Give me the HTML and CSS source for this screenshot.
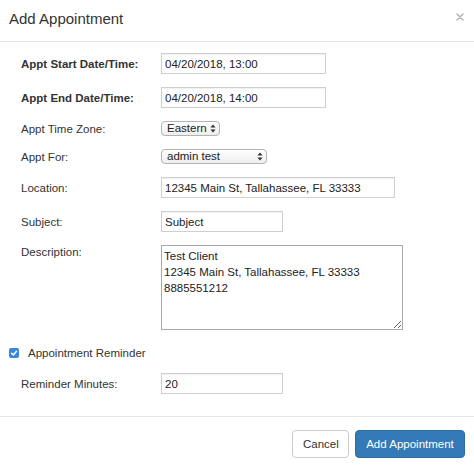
FILE: index.html
```html
<!DOCTYPE html>
<html lang="en">
<head>
<meta charset="utf-8">
<title>Add Appointment</title>
<link rel="stylesheet" href="styles.css">
</head>
<body>
<div class="modal">
  <div class="modal-header">
    <h4 class="modal-title">Add Appointment</h4>
    <svg class="close" width="8" height="8" viewBox="0 0 8 8" aria-label="Close"><path d="M1 1 L7 7 M7 1 L1 7" stroke="#b5b5b5" stroke-width="1.6" stroke-linecap="round"/></svg>
  </div>
  <div class="modal-body">
    <div class="row">
      <label class="lbl bold">Appt Start Date/Time:</label>
      <input class="field w-date" type="text" value="04/20/2018, 13:00">
    </div>
    <div class="row">
      <label class="lbl bold">Appt End Date/Time:</label>
      <input class="field w-date" type="text" value="04/20/2018, 14:00">
    </div>
    <div class="row">
      <label class="lbl">Appt Time Zone:</label>
      <div class="select w-tz"><span>Eastern</span><svg class="arrows" width="6" height="9" viewBox="0 0 6 9"><path d="M3 0.5 L5.6 3.6 L0.4 3.6 Z M3 8.5 L5.6 5.4 L0.4 5.4 Z" fill="#333"/></svg></div>
    </div>
    <div class="row">
      <label class="lbl">Appt For:</label>
      <div class="select w-for"><span>admin test</span><svg class="arrows" width="6" height="9" viewBox="0 0 6 9"><path d="M3 0.5 L5.6 3.6 L0.4 3.6 Z M3 8.5 L5.6 5.4 L0.4 5.4 Z" fill="#333"/></svg></div>
    </div>
    <div class="row">
      <label class="lbl">Location:</label>
      <input class="field w-loc" type="text" value="12345 Main St, Tallahassee, FL 33333">
    </div>
    <div class="row">
      <label class="lbl">Subject:</label>
      <input class="field w-sub" type="text" value="Subject">
    </div>
    <div class="row top">
      <label class="lbl">Description:</label>
      <textarea class="area">Test Client
12345 Main St, Tallahassee, FL 33333
8885551212</textarea>
    </div>
    <div class="check-row">
      <span class="checkbox"><svg width="10" height="10" viewBox="0 0 10 10"><path d="M2.6 5.2 L4.3 6.9 L7.5 3.2" stroke="#fff" stroke-width="1.5" fill="none" stroke-linecap="round" stroke-linejoin="round"/></svg></span>
      <span class="check-label">Appointment Reminder</span>
    </div>
    <div class="row">
      <label class="lbl">Reminder Minutes:</label>
      <input class="field w-sub" type="text" value="20">
    </div>
  </div>
  <div class="modal-footer">
    <button class="btn btn-default" type="button">Cancel</button>
    <button class="btn btn-primary" type="button">Add Appointment</button>
  </div>
</div>
</body>
</html>
```
FILE: styles.css
```css
html, body {
  margin: 0;
  padding: 0;
  background: #fff;
}
body {
  font-family: "Liberation Sans", Arial, sans-serif;
  font-size: 11.5px;
  color: #333;
}
.modal {
  width: 474px;
  background: #fff;
}
.modal-header {
  display: flex;
  justify-content: space-between;
  align-items: flex-start;
  padding: 10px 10px 13px 9px;
  border-bottom: 1px solid #e5e5e5;
}
.modal-title {
  margin: 0;
  font-size: 15px;
  line-height: 18px;
  font-weight: normal;
  color: #333;
}
.close {
  margin-top: 3px;
  display: block;
}
.modal-body {
  padding: 11px 12px 22px 9px;
  display: flex;
  flex-direction: column;
  gap: 13px;
}
.row {
  display: flex;
  align-items: center;
  padding-left: 12px;
}
.row.top {
  align-items: flex-start;
}
.lbl {
  width: 140px;
  flex: none;
  line-height: 14px;
}
.bold {
  font-weight: bold;
}
.field {
  box-sizing: border-box;
  height: 21px;
  margin: 0;
  padding: 0 3px;
  border: 1px solid #cfcfcf;
  box-shadow: inset 0 1px 1px rgba(0,0,0,0.06);
  font-family: "Liberation Sans", Arial, sans-serif;
  font-size: 11.5px;
  color: #222;
  background: #fff;
  outline: none;
}
.w-date { width: 165px; }
.w-loc { width: 234px; }
.w-sub { width: 122px; }
.select {
  box-sizing: border-box;
  height: 15px;
  display: flex;
  align-items: center;
  justify-content: space-between;
  gap: 3px;
  padding: 0 3px 0 5px;
  border: 1px solid #b3b3b3;
  border-radius: 4px;
  background: linear-gradient(#ffffff, #eeeeee);
  font-size: 11.5px;
  color: #222;
}
.select span {
  line-height: 13px;
  white-space: nowrap;
}
.arrows {
  display: block;
  flex: none;
}
.w-tz { width: 59px; }
.w-for { width: 106px; }
.area {
  box-sizing: border-box;
  width: 242px;
  height: 85px;
  margin: 0;
  padding: 2px 2px;
  border: 1px solid #a9a9a9;
  font-family: "Liberation Sans", Arial, sans-serif;
  font-size: 11.5px;
  line-height: 16px;
  color: #222;
  resize: both;
  outline: none;
}
.check-row {
  display: flex;
  align-items: center;
  gap: 9px;
  margin-top: 3px;
  padding-left: 0;
}
.checkbox {
  width: 10px;
  height: 10px;
  border-radius: 2px;
  background: #3a87e0;
  display: flex;
  flex: none;
}
.checkbox svg {
  display: block;
}
.check-label {
  line-height: 14px;
}
.modal-footer {
  display: flex;
  justify-content: flex-end;
  gap: 6px;
  padding: 13px 9px 15px;
  border-top: 1px solid #e5e5e5;
}
.btn {
  box-sizing: border-box;
  height: 28px;
  margin: 0;
  padding: 0 10px;
  border-radius: 4px;
  border: 1px solid #ccc;
  font-family: "Liberation Sans", Arial, sans-serif;
  font-size: 11.5px;
  line-height: 26px;
  cursor: pointer;
}
.btn-default {
  background: #fff;
  color: #333;
  width: 57px;
}
.btn-primary {
  background: #337ab7;
  border-color: #2e6da4;
  color: #fff;
  width: 110px;
}
```
